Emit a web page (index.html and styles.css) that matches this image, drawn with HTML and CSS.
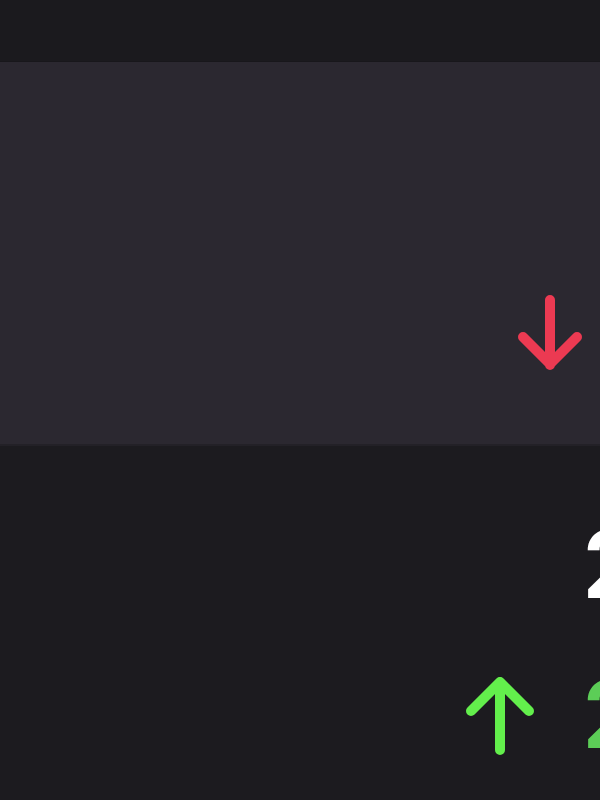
FILE: index.html
```html
<!DOCTYPE html>
<html lang="en">
<head>
    <meta charset="UTF-8">
    <meta name="viewport" content="width=device-width, initial-scale=1.0">
    <title>Market</title>
    <link rel="stylesheet" href="styles.css">
</head>
<body>
    <div class="topbar"></div>
    <div class="hero">
        <svg class="arrow" width="64" height="82" viewBox="0 0 64 82">
            <path d="M32 6 V71 M5 43 L32 70 L59 43" fill="none" stroke="#ec3a52" stroke-width="10" stroke-linecap="round" stroke-linejoin="round"/>
        </svg>
    </div>
    <div class="stats">
        <div class="row">
            <div class="icon"></div>
            <div class="value">248.12</div>
        </div>
        <div class="row">
            <div class="icon">
                <svg width="72" height="82" viewBox="0 0 72 82">
                    <path d="M36 77 V9 M7 38 L36 9 L65 38" fill="none" stroke="#63ef4c" stroke-width="10" stroke-linecap="round" stroke-linejoin="round"/>
                </svg>
            </div>
            <div class="value up">2.45%</div>
        </div>
    </div>
</body>
</html>
```

FILE: styles.css
```css
body {
    margin: 0;
    background-color: #1c1b1f;
    font-family: "Inter", "Roboto", sans-serif;
    overflow: hidden;
    height: 800px;
}
.topbar {
    height: 61px;
    background-color: #1b1a1e;
    border-bottom: 1px solid #18171b;
}
.hero {
    height: 384px;
    background-color: #2b2830;
    border-bottom: 2px solid #232127;
    display: flex;
    align-items: flex-start;
    padding-left: 518px;
    box-sizing: border-box;
}
.arrow {
    margin-top: 232px;
}
.stats {
    padding-top: 43px;
    padding-left: 464px;
}
.row {
    height: 150px;
    display: grid;
    grid-template-columns: 72px auto;
    column-gap: 46px;
    align-items: center;
}
.icon svg {
    display: block;
}
.value {
    font-size: 94px;
    font-weight: 600;
    line-height: 1;
    color: #ffffff;
    white-space: nowrap;
}
.value.up {
    color: #5ccd57;
}
```
